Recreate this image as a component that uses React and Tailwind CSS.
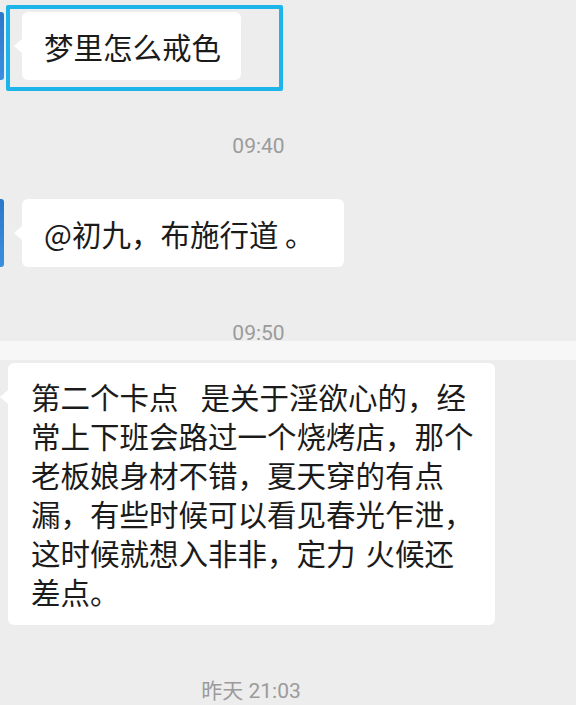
import React from 'react';

const cjk = { fontFamily: '"Noto Sans CJK SC", "Noto Sans", sans-serif' };
const stamp = { fontFamily: 'Roboto, "Noto Sans CJK SC", sans-serif' };

function Avatar() {
  return <div className="h-[68px] w-[4px] shrink-0 rounded-r-[3px] bg-gradient-to-b from-[#2b78c9] to-[#3b8fe0]" />;
}

function Bubble({ children, className = '' }) {
  return (
    <div className={`relative rounded-[6px] bg-white text-[29.5px] leading-[39px] text-[#1b1b1b] ${className}`} style={cjk}>
      {/* little tail on the left */}
      <span className="absolute left-[-8px] top-[27px] h-0 w-0 border-y-[7px] border-r-[8px] border-y-transparent border-r-white" />
      {children}
    </div>
  );
}

function Stamp({ text, width }) {
  return (
    <div className={`relative z-10 ${width} text-center text-[21px] leading-[20px] text-[#9b9b9b]`} style={stamp}>
      {text}
    </div>
  );
}

export default function App() {
  return (
    <div className="relative h-[705px] w-[576px] overflow-hidden bg-[#ededed]">
      {/* message 1 */}
      <div className="flex items-start pt-[12px]">
        <Avatar />
        <Bubble className="ml-[18px] flex h-[68px] items-center pl-[22px] pr-[20px]">梦里怎么戒色</Bubble>
      </div>

      {/* selection frame */}
      <div className="absolute left-[6px] top-[5px] h-[86px] w-[277px] rounded-[2px] border-[4px] border-[#1db4e9]" />

      <div className="mt-[56px]">
        <Stamp text="09:40" width="w-[517px]" />
      </div>

      {/* message 2 */}
      <div className="mt-[43px] flex items-start">
        <Avatar />
        <Bubble className="ml-[18px] flex h-[68px] items-center pl-[22px] pr-[29px]">@初九，布施行道 。</Bubble>
      </div>

      <div className="mt-[56px]">
        <Stamp text="09:50" width="w-[517px]" />
      </div>

      <div className="-mt-[2px] h-[19px] w-full bg-[#f7f7f7]" />

      {/* message 3 */}
      <div className="mt-[3px] pl-[8px]">
        <Bubble className="w-[487px] py-[14px] pl-[23px]">
          <div>
            第二个卡点<span className="inline-block w-[22px]" />是关于淫欲心的，经
          </div>
          <div>常上下班会路过一个烧烤店，那个</div>
          <div>老板娘身材不错，夏天穿的有点</div>
          <div>漏，有些时候可以看见春光乍泄，</div>
          <div>
            这时候就想入非非，定力<span className="inline-block w-[10px]" />火候还
          </div>
          <div>差点。</div>
        </Bubble>
      </div>

      <div className="mt-[56px]">
        <Stamp text="昨天 21:03" width="w-[502px]" />
      </div>
    </div>
  );
}
